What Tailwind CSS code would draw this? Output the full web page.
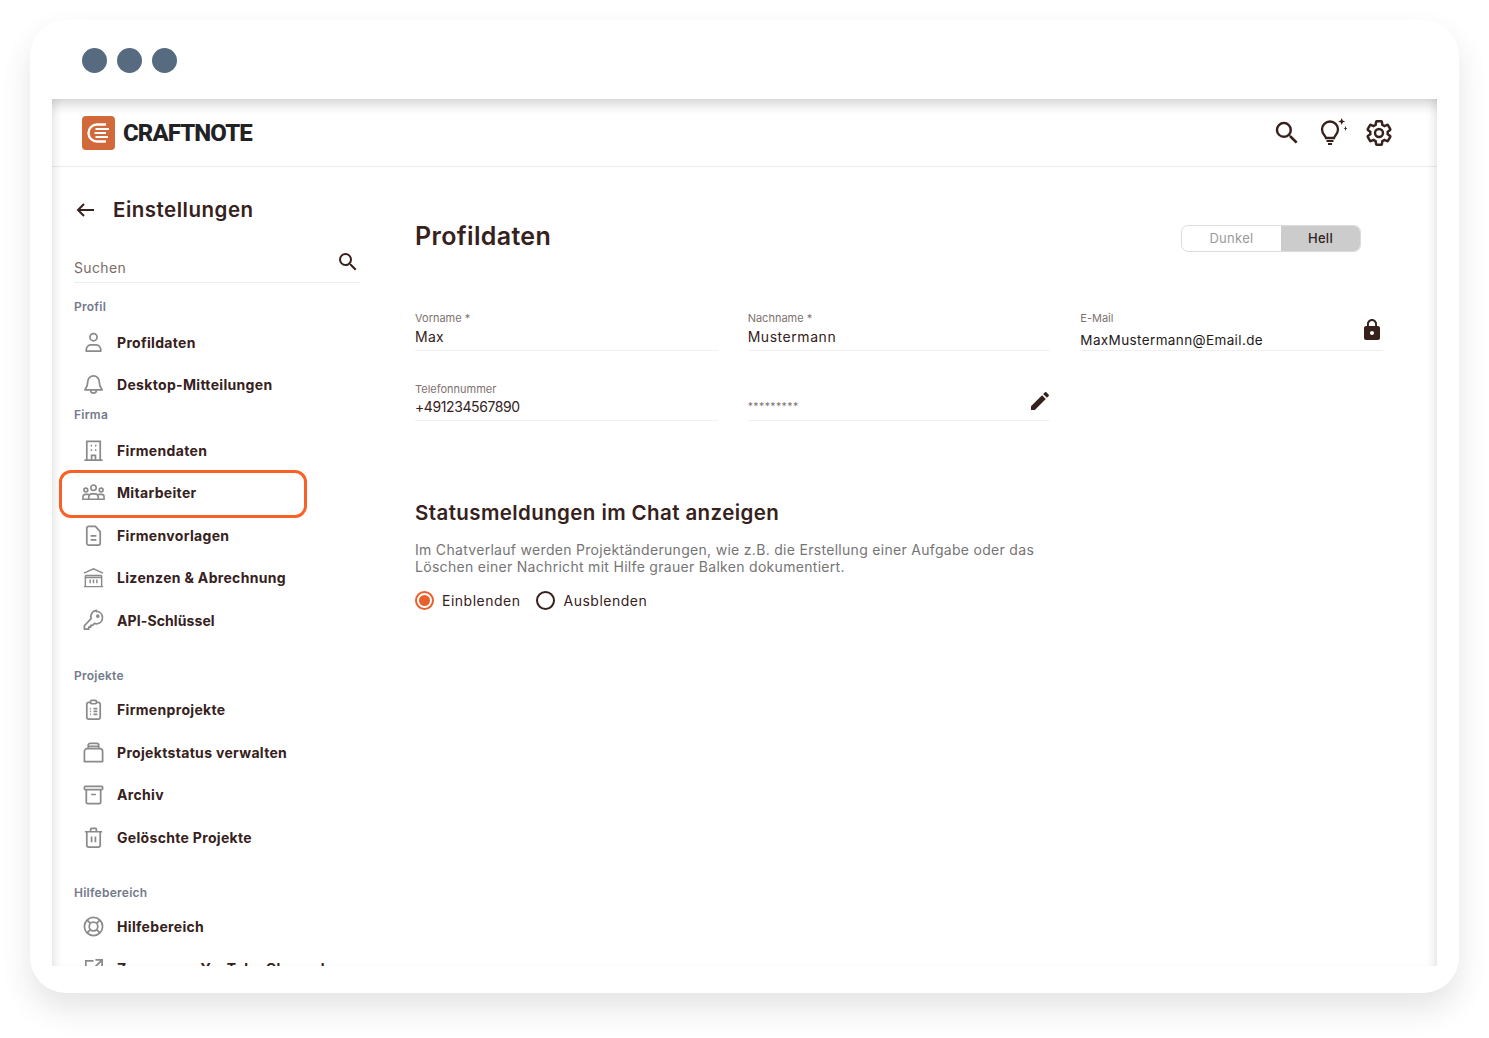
<!DOCTYPE html>
<html lang="de">
<head>
<meta charset="utf-8">
<title>Craftnote Einstellungen</title>
<script src="https://cdn.jsdelivr.net/npm/@tailwindcss/browser@4"></script>
</head>
<body class="bg-white font-['Inter',sans-serif] text-[#36211c] w-[1489px] h-[1038px] overflow-hidden">
<div class="ml-[30px] pt-[20px]">
  <div class="w-[1429px] h-[973px] rounded-[36px] bg-white shadow-[0_16px_30px_rgba(40,40,40,0.12)] px-[22px] flex flex-col">
    <div class="h-[79px] shrink-0 pt-[28px] pl-[30px] flex gap-[10.5px]">
      <span class="w-[24.5px] h-[24.5px] rounded-full bg-[#566a80]"></span>
      <span class="w-[24.5px] h-[24.5px] rounded-full bg-[#566a80]"></span>
      <span class="w-[24.5px] h-[24.5px] rounded-full bg-[#566a80]"></span>
    </div>
    <div class="relative w-[1385px] h-[867px] overflow-hidden bg-white flex flex-col">
      <header class="h-[68px] shrink-0 border-b border-[#ececec] flex items-center justify-between pl-[30px] pr-[44px]">
        <div class="flex items-center gap-[8px]">
          <svg class="w-[33px] h-[34px]" viewBox="0 0 33 34" fill="none">
            <rect width="33" height="34" rx="4" fill="#d2693a"/>
            <path d="M24 8.5H15a8.5 8.5 0 0 0 0 17h9" stroke="#fff" stroke-width="2.4"/>
            <path d="M13.5 13H27M12.5 17H24M13.5 21H26" stroke="#fff" stroke-width="2.2"/>
          </svg>
          <span class="font-['Roboto',sans-serif] font-extrabold text-[24px] leading-none tracking-[-0.9px] text-[#222224]">CRAFTNOTE</span>
        </div>
        <div class="flex items-center gap-[18px]">
          <svg class="w-[30px] h-[30px] mr-[-3px]" viewBox="0 0 24 24" fill="#36211c"><path d="M15.5 14h-.79l-.28-.27A6.471 6.471 0 0 0 16 9.5 6.5 6.5 0 1 0 9.5 16c1.61 0 3.09-.59 4.23-1.57l.27.28v.79l5 4.99L20.49 19l-4.99-5zm-6 0C7.01 14 5 11.99 5 9.5S7.01 5 9.5 5 14 7.01 14 9.5 11.99 14 9.5 14z"/></svg>
          <svg class="w-[30px] h-[30px]" viewBox="0 0 30 30" fill="none" stroke="#36211c" stroke-width="2.3">
            <path d="M9 20c0-2-4-3.500-4-8.500a8 8 0 0 1 16 0c0 5-4 6.500-4 8.500z"/>
            <path d="M9.500 23h7M11 26h4" stroke-width="2"/>
            <path d="M24.700 0l1 2.500 2.500 1-2.500 1-1 2.500-1-2.500-2.500-1 2.500-1zM28.500 8l.6 1.900 1.400.6-1.400.6-.6 1.900-.6-1.900-1.400-.6 1.400-.6z" fill="#36211c" stroke="none"/>
          </svg>
          <svg class="w-[28px] h-[28px]" viewBox="0 0 24 24" fill="none" stroke="#36211c" stroke-width="2.100"><path d="M19.430 12.980c.04-.32.07-.64.07-.98 0-.34-.03-.66-.07-.98l2.110-1.650c.19-.15.24-.42.12-.64l-2-3.460a.5.5 0 0 0-.61-.22l-2.490 1c-.52-.4-1.080-.73-1.690-.98l-.38-2.650A.488.488 0 0 0 14 2h-4c-.25 0-.46.18-.49.42l-.38 2.650c-.61.25-1.170.59-1.690.98l-2.490-1a.5.5 0 0 0-.61.22l-2 3.460c-.13.22-.07.49.12.64l2.110 1.650c-.04.32-.07.65-.07.98 0 .33.03.66.07.98l-2.110 1.650c-.19.15-.24.42-.12.64l2 3.460a.5.5 0 0 0 .61.22l2.490-1c.52.4 1.080.73 1.690.98l.38 2.650c.03.24.24.42.49.42h4c.25 0 .46-.18.49-.42l.38-2.650c.61-.25 1.170-.59 1.690-.98l2.490 1a.5.5 0 0 0 .61-.22l2-3.460c.12-.22.07-.49-.12-.64z"/><circle cx="12" cy="12" r="3.400"/></svg>
        </div>
      </header>
      <div class="flex flex-1 min-h-0">
        <aside class="w-[363px] shrink-0 pl-[22px] pr-[55px]">
          <div class="h-[85px] pt-[30px] flex items-start">
            <div class="flex items-center gap-[15px] h-[26px]">
              <svg class="w-[24px] h-[24px]" viewBox="0 0 24 24" fill="none" stroke="#36211c" stroke-width="2"><path d="M20 12H4M10 6l-6 6 6 6"/></svg>
              <h1 class="text-[20.500px] font-semibold leading-none tracking-[0.5px]">Einstellungen</h1>
            </div>
          </div>
          <div class="relative h-[31px] border-b border-[#eeeeee] flex items-end pb-[4px]">
            <span class="text-[14px] leading-[20px] text-[#7a6c68] tracking-[0.35px]">Suchen</span>
            <svg class="absolute right-[0px] top-[-2px] w-[24px] h-[24px]" viewBox="0 0 24 24" fill="#36211c"><path d="M15.5 14h-.79l-.28-.27A6.471 6.471 0 0 0 16 9.5 6.5 6.5 0 1 0 9.5 16c1.61 0 3.09-.59 4.23-1.570l.27.28v.79l5 4.990L20.490 19l-4.990-5zm-6 0C7.010 14 5 11.990 5 9.500S7.010 5 9.500 5 14 7.010 14 9.500 11.990 14 9.500 14z"/></svg>
          </div>

          <p class="h-[38px] pt-[16px] text-[12px] leading-[16px] font-semibold tracking-[0.25px] text-[#737a8c]">Profil</p>
          <div class="flex items-center h-[42.500px] gap-[11px]">
            <svg class="w-[32px] h-[23px] pl-[8px] pr-[1px]" viewBox="0 0 24 24" fill="none" stroke="#8a8a8a" stroke-width="1.800"><circle cx="12" cy="6.500" r="3.700"/><path d="M4.500 21v-2a5 5 0 0 1 5-4.500h5a5 5 0 0 1 5 4.500v2z" stroke-linejoin="round"/></svg>
            <span class="text-[14px] font-bold tracking-[0.32px]">Profildaten</span>
          </div>
          <div class="flex items-center h-[42.500px] gap-[11px]">
            <svg class="w-[32px] h-[23px] pl-[8px] pr-[1px]" viewBox="0 0 24 24" fill="none" stroke="#8a8a8a" stroke-width="1.800"><path d="M12 3a6 6 0 0 0-6 6c0 5-2 7-3 8.500h18c-1-1.500-3-3.500-3-8.500a6 6 0 0 0-6-6z" stroke-linejoin="round"/><path d="M9 18a3 3 0 0 0 6 0"/></svg>
            <span class="text-[14px] font-bold tracking-[0.32px]">Desktop-Mitteilungen</span>
          </div>

          <p class="h-[23px] pt-[1px] text-[12px] leading-[16px] font-semibold tracking-[0.25px] text-[#737a8c]">Firma</p>
          <div class="flex items-center h-[42.500px] gap-[11px]">
            <svg class="w-[32px] h-[23px] pl-[8px] pr-[1px]" viewBox="0 0 24 24" fill="none" stroke="#8a8a8a" stroke-width="1.800"><path d="M5 22V2.500h14V22M2.500 22h19M10 22v-5h4v5M9 7h1.500M13.500 7H15M9 11.500h1.500M13.500 11.500H15"/></svg>
            <span class="text-[14px] font-bold tracking-[0.32px]">Firmendaten</span>
          </div>
          <div class="relative flex items-center h-[42.500px] gap-[11px]">
            <span class="absolute left-[-15px] top-[-2px] w-[248px] h-[48px] rounded-[12px] border-[3px] border-[#f96127]"></span>
            <svg class="w-[32px] h-[23px] pl-[8px] pr-[1px]" viewBox="0 0 24 24" fill="none" stroke="#8a8a8a" stroke-width="1.700"><circle cx="12" cy="7" r="2.800"/><circle cx="4" cy="9.500" r="2"/><circle cx="20" cy="9.500" r="2"/><path d="M7 19v-2.500a3.500 3.500 0 0 1 3.500-3h3a3.500 3.500 0 0 1 3.500 3V19zM7 14H3.500A2.500 2.500 0 0 0 1 16.500V19h6M17 14h3.500a2.500 2.500 0 0 1 2.500 2.500V19h-6"/></svg>
            <span class="text-[14px] font-bold tracking-[0.32px]">Mitarbeiter</span>
          </div>
          <div class="flex items-center h-[42.500px] gap-[11px]">
            <svg class="w-[32px] h-[23px] pl-[8px] pr-[1px]" viewBox="0 0 24 24" fill="none" stroke="#8a8a8a" stroke-width="1.800"><path d="M5 4.500A2 2 0 0 1 7 2.500h7l5 5.500v12a2 2 0 0 1-2 2H7a2 2 0 0 1-2-2zM9 12.500h6M9 16.500h6"/></svg>
            <span class="text-[14px] font-bold tracking-[0.32px]">Firmenvorlagen</span>
          </div>
          <div class="flex items-center h-[42.500px] gap-[11px]">
            <svg class="w-[32px] h-[23px] pl-[8px] pr-[1px]" viewBox="0 0 24 24" fill="none" stroke="#8a8a8a" stroke-width="1.500"><path d="M2 7.500 12 3l10 4.500M3.500 10h17M3.500 10v11M20.500 10v11M2 21.500h20M8.500 14v4M12 14v4M15.500 14v4M3.500 12h17"/></svg>
            <span class="text-[14px] font-bold tracking-[0.32px]">Lizenzen &amp; Abrechnung</span>
          </div>
          <div class="flex items-center h-[42.500px] gap-[11px]">
            <svg class="w-[32px] h-[23px] pl-[8px] pr-[1px]" viewBox="0 0 24 24" fill="none" stroke="#8a8a8a" stroke-width="1.800"><path d="M15 2.500a6.500 6.500 0 0 1 1 12.900c-1 .1-2 0-3-.4l-2 2h-2v2H7v2H2.500v-3.500l7-7.500a6.500 6.500 0 0 1 5.500-8.500z" stroke-linejoin="round"/><circle cx="16.500" cy="7.500" r="1"/></svg>
            <span class="text-[14px] font-bold tracking-[0.1px]">API-Schlüssel</span>
          </div>

          <p class="h-[47px] pt-[26px] text-[12px] leading-[16px] font-semibold tracking-[0.25px] text-[#737a8c]">Projekte</p>
          <div class="flex items-center h-[42.500px] gap-[11px]">
            <svg class="w-[32px] h-[23px] pl-[8px] pr-[1px]" viewBox="0 0 24 24" fill="none" stroke="#8a8a8a" stroke-width="1.800"><path d="M9 4.500H7a2 2 0 0 0-2 2V20a2 2 0 0 0 2 2h10a2 2 0 0 0 2-2V6.500a2 2 0 0 0-2-2h-2"/><rect x="9" y="2.500" width="6" height="3.500" rx="1"/><path d="M8.500 11h1M12 11h4M8.500 14h1M12 14h4M8.500 17h1M12 17h4"/></svg>
            <span class="text-[14px] font-bold tracking-[0.32px]">Firmenprojekte</span>
          </div>
          <div class="flex items-center h-[42.500px] gap-[11px]">
            <svg class="w-[32px] h-[23px] pl-[8px] pr-[1px]" viewBox="0 0 24 24" fill="none" stroke="#8a8a8a" stroke-width="1.800"><path d="M6.500 8V4.500a2 2 0 0 1 2-2h7a2 2 0 0 1 2 2V8M6 5.500h12"/><path d="M2.500 21.500V11a3 3 0 0 1 3-3h13a3 3 0 0 1 3 3v10.500z" stroke-linejoin="round"/></svg>
            <span class="text-[14px] font-bold tracking-[0.32px]">Projektstatus verwalten</span>
          </div>
          <div class="flex items-center h-[42.500px] gap-[11px]">
            <svg class="w-[32px] h-[23px] pl-[8px] pr-[1px]" viewBox="0 0 24 24" fill="none" stroke="#8a8a8a" stroke-width="1.800"><rect x="2.500" y="3.500" width="19" height="3.500" rx="1"/><path d="M4.500 7v13a1.500 1.500 0 0 0 1.500 1.500h12a1.500 1.500 0 0 0 1.500-1.500V7M9.500 12h5"/></svg>
            <span class="text-[14px] font-bold tracking-[0.32px]">Archiv</span>
          </div>
          <div class="flex items-center h-[42.500px] gap-[11px]">
            <svg class="w-[32px] h-[23px] pl-[8px] pr-[1px]" viewBox="0 0 24 24" fill="none" stroke="#8a8a8a" stroke-width="1.800"><path d="M3 6h18M9 6V3.500a1 1 0 0 1 1-1h4a1 1 0 0 1 1 1V6M5 6v14a2 2 0 0 0 2 2h10a2 2 0 0 0 2-2V6M10 11v6M14 11v6"/></svg>
            <span class="text-[14px] font-bold tracking-[0.32px]">Gelöschte Projekte</span>
          </div>

          <p class="h-[46.500px] pt-[26px] text-[12px] leading-[16px] font-semibold tracking-[0.25px] text-[#737a8c]">Hilfebereich</p>
          <div class="flex items-center h-[42.500px] gap-[11px]">
            <svg class="w-[32px] h-[23px] pl-[8px] pr-[1px]" viewBox="0 0 24 24" fill="none" stroke="#8a8a8a" stroke-width="1.800"><circle cx="12" cy="12" r="9.500"/><circle cx="12" cy="12" r="4.500"/><path d="m5.300 5.300 3.500 3.500M18.700 5.300l-3.500 3.500M5.300 18.700l3.500-3.500M18.700 18.700l-3.500-3.500"/></svg>
            <span class="text-[14px] font-bold tracking-[0.32px]">Hilfebereich</span>
          </div>
          <div class="flex items-center h-[42.500px] gap-[11px]">
            <svg class="w-[32px] h-[23px] pl-[8px] pr-[1px]" viewBox="0 0 24 24" fill="none" stroke="#8a8a8a" stroke-width="1.800"><path d="M12 4H4v16h16v-8M14 3h7v7M21 3l-9 9"/></svg>
            <span class="text-[14px] font-bold tracking-[0.32px]">Zum neuen YouTube Channel</span>
          </div>
        </aside>

        <main class="flex-1 pl-[0px] pr-[54px] pt-[50px]">
          <div class="flex items-start justify-between pr-[22px] h-[83px]">
            <h2 class="text-[25px] font-semibold leading-[38px] tracking-[0.35px]">Profildaten</h2>
            <div class="mt-[8px] flex w-[180px] h-[27px] rounded-[7px] border border-[#dcdcdc] overflow-hidden text-[13px]">
              <span class="w-[99px] flex items-center justify-center text-[#9a9a9a] tracking-[0.3px]">Dunkel</span>
              <span class="flex-1 flex items-center justify-center bg-[#cccccc] font-medium text-[#2f2422] tracking-[0.3px]">Hell</span>
            </div>
          </div>

          <div class="grid grid-cols-3 gap-x-[30px] gap-y-[20px] text-[#36211c]">
            <div class="h-[50.500px] border-b border-[#f0f0f0]">
              <p class="text-[11px] leading-[14px] pt-[11px] box-content text-[#7e726f]">Vorname *</p>
              <p class="text-[14px] leading-[20px] tracking-[0.25px] mt-[1.5px]">Max</p>
            </div>
            <div class="h-[50.500px] border-b border-[#f0f0f0]">
              <p class="text-[11px] leading-[14px] pt-[11px] box-content text-[#7e726f]">Nachname *</p>
              <p class="text-[14px] leading-[20px] tracking-[0.55px] mt-[1.5px]">Mustermann</p>
            </div>
            <div class="relative h-[50.500px] border-b border-[#f0f0f0]">
              <p class="text-[11px] leading-[14px] pt-[11px] box-content text-[#7e726f]">E-Mail</p>
              <p class="text-[13.500px] leading-[20px] tracking-[0.38px] mt-[4.5px] text-[#1e1a19]">MaxMustermann@Email.de</p>
              <svg class="absolute right-[-1px] top-[18px] w-[24px] h-[24px]" viewBox="0 0 24 24" fill="#36211c"><path d="M18 8h-1V6c0-2.760-2.240-5-5-5S7 3.240 7 6v2H6c-1.100 0-2 .9-2 2v10c0 1.100.9 2 2 2h12c1.100 0 2-.9 2-2V10c0-1.100-.9-2-2-2zm-6 9c-1.100 0-2-.9-2-2s.9-2 2-2 2 .9 2 2-.9 2-2 2zm3.100-9H8.900V6c0-1.710 1.390-3.100 3.100-3.100 1.710 0 3.100 1.390 3.100 3.100v2z"/></svg>
            </div>
            <div class="h-[50.500px] border-b border-[#f0f0f0]">
              <p class="text-[11px] leading-[14px] pt-[11px] box-content text-[#7e726f]">Telefonnummer</p>
              <p class="text-[14px] leading-[20px] tracking-[-0.4px] mt-[1.5px]">+491234567890</p>
            </div>
            <div class="relative h-[50.500px] border-b border-[#f0f0f0]">
              <p class="text-[11px] leading-[14px] pt-[11px] box-content text-transparent">Passwort</p>
              <p class="text-[10.500px] leading-[14px] mt-[4px] text-[#7e726f] tracking-[0.4px]">*********</p>
              <svg class="absolute right-[-2px] top-[18px] w-[24px] h-[24px]" viewBox="0 0 24 24" fill="#36211c"><path d="M3 17.250V21h3.750L17.810 9.940l-3.750-3.750L3 17.250zM20.710 7.040a1 1 0 0 0 0-1.410l-2.340-2.340a1 1 0 0 0-1.410 0l-1.830 1.830 3.750 3.750 1.830-1.830z"/></svg>
            </div>
          </div>

          <h3 class="mt-[77.5px] text-[20.500px] leading-[28px] font-semibold tracking-[0.4px]">Statusmeldungen im Chat anzeigen</h3>
          <p class="mt-[14px] w-[640px] text-[14px] leading-[17.500px] tracking-[0.3px] text-[#757575]">Im Chatverlauf werden Projektänderungen, wie z.B. die Erstellung einer Aufgabe oder das<br>Löschen einer Nachricht mit Hilfe grauer Balken dokumentiert.</p>
          <div class="mt-[12.5px] flex items-center text-[14px] tracking-[0.5px] h-[24px]">
            <span class="w-[19px] h-[19px] rounded-full border-2 border-[#e8602c] flex items-center justify-center"><span class="w-[11px] h-[11px] rounded-full bg-[#e8602c]"></span></span>
            <span class="ml-[8px]">Einblenden</span>
            <span class="ml-[16px] w-[19px] h-[19px] rounded-full border-2 border-[#36211c]"></span>
            <span class="ml-[8px]">Ausblenden</span>
          </div>
        </main>
      </div>
      <div class="absolute inset-0 pointer-events-none shadow-[inset_0_14px_12px_-8px_rgba(0,0,0,0.16),inset_9px_0_8px_-6px_rgba(0,0,0,0.1),inset_-9px_0_8px_-6px_rgba(0,0,0,0.1)]"></div>
    </div>
  </div>
</div>
</body>
</html>
